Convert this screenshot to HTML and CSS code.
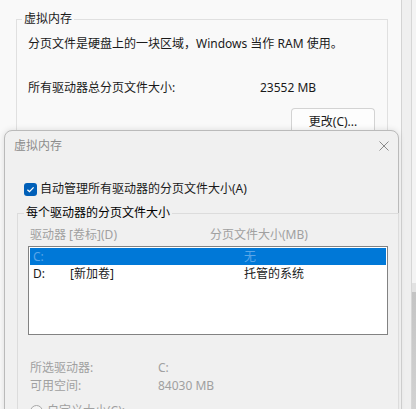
FILE: index.html
```html
<!DOCTYPE html>
<html lang="zh-CN">

<head>
  <meta charset="UTF-8">
  <meta name="viewport" content="width=device-width, initial-scale=1.0">
  <title>虚拟内存</title>
  <link rel="stylesheet" href="styles.css">
</head>

<body>
  <div class="desk">
    <div class="back">
      <fieldset class="group">
        <legend>虚拟内存</legend>
        <p class="note">分页文件是硬盘上的一块区域，Windows 当作 RAM 使用。</p>
        <div class="total">
          <span class="total-label">所有驱动器总分页文件大小:</span>
          <span>23552 MB</span>
        </div>
        <div class="actions">
          <button class="btn" type="button">更改(C)...</button>
        </div>
      </fieldset>
    </div>
    <div class="side">
      <div class="track">
        <div class="band"></div>
        <div class="thumb"></div>
      </div>
    </div>
  </div>

  <div class="dialog">
    <div class="titlebar">
      <span class="title">虚拟内存</span>
      <svg class="close" width="10" height="10" viewBox="0 0 10 10">
        <path d="M0.5 0.5 L9.5 9.5 M9.5 0.5 L0.5 9.5" stroke="#8a8a8a" stroke-width="1" fill="none" />
      </svg>
    </div>

    <label class="check-row">
      <span class="check">
        <svg width="13" height="13" viewBox="0 0 13 13">
          <path d="M3.4 6.7 L5.5 8.7 L9.6 4.4" stroke="#fff" stroke-width="1.3" fill="none" />
        </svg>
      </span>
      自动管理所有驱动器的分页文件大小(A)
    </label>

    <fieldset class="drives">
      <legend>每个驱动器的分页文件大小</legend>
      <div class="heads">
        <span class="col-drive">驱动器 [卷标](D)</span>
        <span>分页文件大小(MB)</span>
      </div>
      <div class="list">
        <div class="row sel">
          <span class="c1">C:</span>
          <span class="c2"></span>
          <span>无</span>
        </div>
        <div class="row">
          <span class="c1">D:</span>
          <span class="c2">[新加卷]</span>
          <span>托管的系统</span>
        </div>
      </div>
      <div class="info">
        <div class="info-row"><span class="info-label">所选驱动器:</span><span>C:</span></div>
        <div class="info-row"><span class="info-label">可用空间:</span><span>84030 MB</span></div>
      </div>
      <div class="radio-row">
        <span class="radio"></span>
        <span>自定义大小(C):</span>
      </div>
    </fieldset>
  </div>
</body>

</html>
```

FILE: styles.css
```css
body {
  margin: 0;
  height: 409px;
  overflow: hidden;
  position: relative;
  font-family: "Noto Sans", "Noto Sans CJK SC", sans-serif;
  font-size: 12px;
  line-height: 16px;
  color: #1a1a1a;
  text-autospace: no-autospace;
}

p {
  margin: 0;
}

.desk {
  display: flex;
  height: 409px;
}

.back {
  flex: 0 0 401px;
  border-right: 1px solid #d3d3d3;
  background: #f9f9f9;
}

.group {
  box-sizing: border-box;
  width: 372px;
  height: 160px;
  margin: 11px 0 0 16px;
  padding: 9px 12px 0 11px;
  border: 1px solid #e0e0e0;
}

.group legend {
  padding: 0 2px;
  margin-left: -6px;
  line-height: 16px;
}

.total {
  display: flex;
  margin-top: 28px;
}

.total-label {
  width: 232px;
}

.actions {
  display: flex;
  justify-content: flex-end;
  margin-top: 12px;
}

.btn {
  width: 84px;
  height: 27px;
  padding: 0;
  border: 1px solid #d3d3d3;
  border-bottom-color: #bdbdbd;
  border-radius: 4px;
  background: #fdfdfd;
  font: inherit;
  color: #1a1a1a;
}

.side {
  flex: 1;
  display: flex;
  background: #efefef;
}

.track {
  flex: 1;
  margin-left: 9px;
  display: flex;
  flex-direction: column;
  justify-content: flex-end;
  border-left: 1px solid #d6d6d6;
  background: #f4f4f4;
}

.band {
  height: 9px;
  background: #e2e2e2;
}

.thumb {
  height: 117px;
  background: linear-gradient(#c4c4c4, #d2d2d2);
}

/* dialog window on top */
.dialog {
  position: absolute;
  left: 4px;
  top: 130px;
  box-sizing: border-box;
  width: 395px;
  height: 300px;
  border: 1px solid #bababa;
  border-radius: 8px 8px 0 0;
  background: #f0f0f0;
  box-shadow: 0 0 6px rgba(0, 0, 0, 0.12);
}

.titlebar {
  height: 29px;
  display: flex;
  align-items: center;
  justify-content: space-between;
  padding: 0 9px;
}

.title {
  color: #8c8c8c;
}

.check-row {
  display: flex;
  align-items: center;
  gap: 3px;
  margin-top: 21px;
  padding-left: 19px;
}

.check {
  width: 13px;
  height: 13px;
  border-radius: 3px;
  background: #005fb8;
  display: flex;
}

.drives {
  box-sizing: border-box;
  width: 369px;
  height: 240px;
  margin: 7px 0 0 12px;
  padding: 5px 10px 0 10px;
  border: 1px solid #dcdcdc;
}

.drives legend {
  padding: 0 2px;
  margin-left: -4px;
  line-height: 18px;
  color: #000;
}

.heads {
  display: flex;
  padding-left: 2px;
  color: #a0a0a0;
}

.col-drive {
  width: 180px;
}

.list {
  box-sizing: border-box;
  width: 360px;
  height: 89px;
  margin-top: 3px;
  padding: 1px;
  border: 1px solid #828282;
  background: #fff;
}

.row {
  display: flex;
  height: 17px;
  line-height: 17px;
  padding-left: 3px;
}

.row.sel {
  background: #0078d7;
  color: #5aa6e8;
}

.c1 {
  width: 37px;
}

.c2 {
  width: 174px;
}

.info {
  margin-top: 24px;
  padding-left: 2px;
  color: #a0a0a0;
}

.info-row {
  display: flex;
  line-height: 18px;
}

.info-label {
  width: 128px;
}

.radio-row {
  display: flex;
  align-items: center;
  gap: 4px;
  margin-top: 8px;
  padding-left: 2px;
  color: #a0a0a0;
}

.radio {
  box-sizing: border-box;
  width: 13px;
  height: 13px;
  border: 1px solid #a8a8a8;
  border-radius: 50%;
  background: #f5f5f5;
}
```
